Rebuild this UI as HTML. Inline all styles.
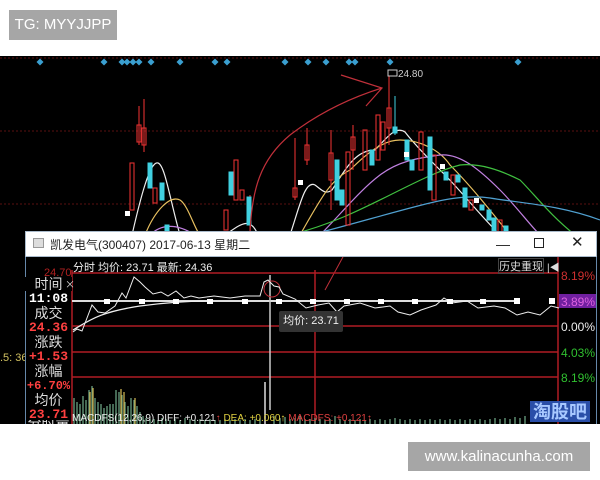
<!DOCTYPE html>
<html><head><meta charset="utf-8"><style>
*{margin:0;padding:0;box-sizing:border-box}
body{width:600px;height:480px;background:#fff;position:relative;overflow:hidden;font-family:"Liberation Sans","Noto Sans CJK SC",sans-serif}
.a{position:absolute;white-space:nowrap}
.l{position:absolute;left:25px;width:47px;text-align:center;font-size:14px;line-height:14px}
.cn{color:#ddd;font-family:"Noto Sans CJK SC",sans-serif;font-size:14px}
.rd{color:#ff4040;font-weight:bold;font-size:13px;font-family:"Liberation Mono",monospace}
.wt{color:#fff;font-weight:bold;font-size:13px;font-family:"Liberation Mono",monospace}
.r{position:absolute;left:561px;font-size:12px;line-height:14px}
</style></head><body>
<div class="a" style="left:9px;top:10px;width:108px;height:30px;background:#a6a6a6;color:#fff;font-size:15px;line-height:30px;text-align:center">TG: MYYJJPP</div>
<div class="a" style="left:0;top:56px;width:600px;height:368px;background:#000"></div>
<svg class="a" style="left:0;top:56px" width="600" height="180" viewBox="0 56 600 180">
<g stroke="#5a1010" stroke-dasharray="2 2"><line x1="0" y1="58" x2="600" y2="58"/><line x1="0" y1="131" x2="600" y2="131"/><line x1="0" y1="204" x2="600" y2="204"/></g>
<g fill="#3a9fd0">
<g id="d"><path d="M0-3.5L3.5 0L0 3.5L-3.5 0Z"/></g>
<use href="#d" x="40" y="62"/><use href="#d" x="104" y="62"/><use href="#d" x="122" y="62"/><use href="#d" x="127" y="62"/><use href="#d" x="133" y="62"/><use href="#d" x="139" y="62"/><use href="#d" x="151" y="62"/><use href="#d" x="180" y="62"/><use href="#d" x="215" y="62"/><use href="#d" x="227" y="62"/><use href="#d" x="285" y="62"/><use href="#d" x="308" y="62"/><use href="#d" x="326" y="62"/><use href="#d" x="349" y="62"/><use href="#d" x="355" y="62"/><use href="#d" x="390" y="62"/><use href="#d" x="518" y="62"/>
</g>
<g fill="none" stroke-width="1.2">
<path d="M132 235C140 200 150 160 158 163C165 165 170 200 180 235" stroke="#eee"/>
<path d="M145 235C155 210 170 195 180 200C188 205 195 230 200 235" stroke="#e8c060"/>
<path d="M150 235C160 225 175 222 195 235" stroke="#c080e0"/>
<path d="M225 235C240 225 250 215 258 235" stroke="#eee"/>
<path d="M290 235C300 205 305 180 315 185C322 190 325 195 332 190C345 170 355 150 375 150C385 140 395 125 405 132C415 145 430 160 445 175C460 190 480 215 500 235" stroke="#eee"/>
<path d="M300 235C320 200 330 180 350 170C370 150 385 140 400 140C420 140 440 150 450 165C470 185 490 210 510 235" stroke="#e8c060"/>
<path d="M320 235C340 215 360 190 380 175C400 160 420 158 440 155C460 153 480 170 500 190C515 205 530 225 540 235" stroke="#c080e0"/>
<path d="M290 235C330 225 360 210 390 195C420 180 440 170 460 165C480 163 500 170 520 180C535 195 550 215 575 235" stroke="#40c040"/>
<path d="M310 235C350 225 400 210 430 203C450 198 470 195 490 198C520 203 560 205 600 220" stroke="#50a0d0"/>
</g>
<g stroke="#e03030" fill="none" stroke-width="1.1">
<line x1="139" y1="106" x2="139" y2="145"/><rect x="137" y="125" width="4" height="17"/>
<line x1="144" y1="99" x2="144" y2="152"/><rect x="142" y="128" width="4" height="17"/>
<rect x="130" y="163" width="4" height="47"/><rect x="153" y="188" width="4" height="15"/>
<rect x="234" y="160" width="4" height="40"/><rect x="240" y="190" width="4" height="10"/><rect x="224" y="210" width="4" height="20"/>
<line x1="295" y1="138" x2="295" y2="200"/><rect x="293" y="188" width="4" height="9"/>
<line x1="307" y1="128" x2="307" y2="165"/><rect x="305" y="145" width="4" height="15"/>
<line x1="331" y1="130" x2="331" y2="210"/><rect x="329" y="153" width="4" height="27"/>
<rect x="346" y="152" width="4" height="73"/>
<line x1="353" y1="125" x2="353" y2="170"/><rect x="351" y="137" width="4" height="13"/>
<rect x="363" y="130" width="4" height="40"/><rect x="376" y="115" width="4" height="45"/><rect x="381" y="122" width="4" height="28"/>
<line x1="389" y1="76" x2="389" y2="145"/><rect x="387" y="108" width="4" height="20"/>
<rect x="419" y="132" width="4" height="38"/><rect x="432" y="155" width="4" height="45"/><rect x="451" y="175" width="4" height="20"/><rect x="469" y="200" width="4" height="10"/><rect x="498" y="220" width="4" height="12"/>
<line x1="250" y1="195" x2="250" y2="260"/>
</g>
<g fill="#40d0e0" stroke="#40d0e0">
<rect x="148" y="163" width="4" height="25"/><rect x="160" y="183" width="4" height="17"/><rect x="165" y="225" width="4" height="10"/>
<rect x="229" y="172" width="4" height="23"/><rect x="247" y="197" width="4" height="28"/>
<rect x="335" y="160" width="4" height="40"/><rect x="340" y="190" width="4" height="15"/><rect x="370" y="150" width="4" height="15"/>
<line x1="395" y1="96" x2="395" y2="135"/><rect x="393" y="127" width="4" height="6"/>
<rect x="405" y="140" width="4" height="20"/><rect x="410" y="160" width="4" height="10"/><rect x="428" y="137" width="4" height="53"/><rect x="444" y="172" width="4" height="8"/><rect x="456" y="175" width="4" height="7"/><rect x="463" y="188" width="4" height="19"/><rect x="480" y="205" width="4" height="5"/><rect x="487" y="210" width="4" height="10"/><rect x="492" y="218" width="4" height="14"/><rect x="504" y="226" width="4" height="7"/>
</g>
<g fill="#fff"><rect x="125" y="211" width="5" height="5"/><rect x="298" y="180" width="5" height="5"/><rect x="404" y="152" width="5" height="5"/><rect x="440" y="164" width="5" height="5"/><rect x="474" y="198" width="5" height="5"/></g>
<rect x="388" y="70" width="9" height="6" fill="none" stroke="#ccc"/>
<text x="398" y="77" fill="#ccc" font-size="10" font-family="Liberation Sans">24.80</text>
<path d="M250 232C252 190 260 160 290 135C320 112 350 98 382 88M341 75L382 88L366 106" stroke="#c0303a" fill="none" stroke-width="1.2"/>
<path d="M0 250L8 246L20 244" stroke="#e8c060" fill="none"/><path d="M0 258L10 253L22 252" stroke="#40c040" fill="none"/>
</svg>
<div class="a" style="left:0;top:352px;color:#d0c060;font-size:11px">.5: 36</div>
<div class="a" style="left:25px;top:233px;width:572px;height:191px;background:#000;border-left:1px solid #6688aa;border-right:1px solid #6688aa"></div>
<div class="a" style="left:25px;top:231px;width:572px;height:26px;background:#fff;border:1px solid #aabbcc"></div>
<div class="a" style="left:33px;top:238px;width:11px;height:10px;border:1px solid #999;background:#ddd"></div>
<div class="a" style="left:50px;top:236px;font-size:12px;color:#222">凯发电气(300407) 2017-06-13 星期二</div>
<div class="a" style="left:496px;top:236px;font-size:14px;color:#222">—</div>
<div class="a" style="left:534px;top:238px;width:10px;height:10px;border:1.5px solid #222"></div>
<div class="a" style="left:571px;top:233px;font-size:15px;color:#222">✕</div>
<svg class="a" style="left:0;top:257px" width="600" height="167" viewBox="0 257 600 167">
<path d="M317 248L350 244L325 290" stroke="#c0303a" fill="none"/>
<g stroke="#b01c24" stroke-width="1.5"><line x1="72" y1="273" x2="558" y2="273"/><line x1="72" y1="326" x2="558" y2="326"/><line x1="72" y1="352" x2="558" y2="352"/><line x1="72" y1="377" x2="558" y2="377"/><line x1="315" y1="270" x2="315" y2="424"/><line x1="558" y1="257" x2="558" y2="424"/><line x1="72" y1="270" x2="72" y2="424"/></g>
<line x1="72" y1="301" x2="520" y2="301" stroke="#ddd" stroke-width="2"/>
<line x1="270" y1="275" x2="270" y2="410" stroke="#ccc" stroke-width="1.5"/>
<circle cx="272" cy="289" r="8" stroke="#c0303a" fill="none"/>
<path d="M73 332L77 329L82 331L92 305L98 312L105 313L115 306L122 293L126 298L134 277L140 282L145 287L153 294L161 292L168 296L176 291L184 298L191 296L199 298L214 296L230 298L245 296L260 296L264 282L268 280L274 286L279 287L283 294L295 299L306 308L318 305L329 303L337 312L344 306L360 303L375 308L390 306L398 312L410 315L421 310L436 305L444 298L452 303L467 301L478 308L494 306L505 308L517 315L528 312L540 315L551 306L559 308" stroke="#eee" fill="none"/>
<path d="M73 330C90 320 100 312 140 306C170 302 190 301 210 301" stroke="#eee" fill="none" stroke-width="1.3"/>
<g fill="#fff"><rect x="104" y="299" width="6" height="5"/><rect x="139" y="299" width="6" height="5"/><rect x="173" y="299" width="6" height="5"/><rect x="207" y="299" width="6" height="5"/><rect x="242" y="299" width="6" height="5"/><rect x="276" y="299" width="6" height="5"/><rect x="310" y="299" width="6" height="5"/><rect x="344" y="299" width="6" height="5"/><rect x="378" y="299" width="6" height="5"/><rect x="412" y="299" width="6" height="5"/><rect x="447" y="299" width="6" height="5"/><rect x="480" y="299" width="6" height="5"/><rect x="514" y="298" width="6" height="6"/><rect x="549" y="298" width="6" height="6"/></g>
<g stroke="#6aa080" stroke-width="1.3">
<path d="M74 424V398M77 424V402M80 424V404M83 424V396M86 424V400M89 424V390M92 424V386M95 424V398M98 424V402M101 424V404M104 424V408M107 424V406M110 424V404M113 424V404M116 424V390M119 424V392M122 424V395M125 424V402M128 424V406M131 424V398M134 424V400M137 424V406M140 424V412M143 424V416"/>
<path d="M146 424V418M150 424V419M154 424V419M158 424V420M162 424V418M166 424V419M170 424V420M175 424V419M180 424V420M185 424V418M190 424V419M195 424V420M200 424V419M205 424V420M210 424V419M215 424V420M220 424V420M225 424V419M230 424V420M235 424V419M240 424V420M245 424V419M250 424V420M255 424V419M260 424V418M274 424V416M280 424V418M285 424V417M290 424V419M295 424V418M300 424V416M305 424V419M310 424V419M315 424V418M320 424V419M325 424V420M330 424V419M335 424V416M340 424V419M345 424V420M350 424V419M355 424V420M360 424V419M365 424V420M370 424V419M375 424V420M380 424V419M385 424V420M390 424V419M395 424V418M400 424V419M405 424V420M410 424V419M415 424V420M420 424V419M425 424V420M430 424V419M435 424V420M440 424V419M445 424V420M450 424V419M455 424V420M460 424V419M465 424V420M470 424V419M475 424V420M480 424V419M485 424V420M490 424V419M495 424V418M500 424V419M505 424V418M510 424V419M515 424V417M520 424V418M525 424V416"/>
</g>
<g stroke="#c8b050" stroke-width="1.3"><path d="M90 424V392M93 424V388M121 424V389M124 424V392M135 424V398"/></g>
<line x1="265" y1="424" x2="265" y2="382" stroke="#ddd" stroke-width="1.5"/>
</svg>
<div class="a" style="left:279px;top:311px;width:64px;height:21px;background:#333;border-radius:2px;color:#eee;font-size:11px;line-height:21px;text-align:center">均价: 23.71</div>
<div class="a" style="left:73px;top:259px;font-size:11px;color:#eee;font-family:'Liberation Sans','Noto Sans CJK SC',sans-serif">分时 均价: 23.71 最新: 24.36</div>
<div class="a" style="left:498px;top:258px;width:46px;height:16px;border:1px solid #444;font-size:11px;color:#ddd;text-align:center;line-height:15px;font-family:'Noto Sans CJK SC',sans-serif">历史重现</div>
<div class="a" style="left:547px;top:259px;font-size:10px;color:#ddd">|◀</div>
<div class="a" style="left:44px;top:267px;font-size:11px;color:#b02020">24.70</div>
<div class="l cn" style="top:277px;background:#000">时间<span style="font-size:10px;position:absolute;right:-3px;top:0">×</span></div>
<div class="l wt" style="top:292px">11:08</div>
<div class="l cn" style="top:306px">成交</div>
<div class="l rd" style="top:321px">24.36</div>
<div class="l cn" style="top:335px">涨跌</div>
<div class="l rd" style="top:350px">+1.53</div>
<div class="l cn" style="top:364px">涨幅</div>
<div class="l rd" style="top:379px;font-size:12px">+6.70%</div>
<div class="l cn" style="top:393px">均价</div>
<div class="l rd" style="top:408px">23.71</div>
<div class="l cn" style="top:420px;height:4px;overflow:hidden"><span style="position:relative;top:-4px">分时量</span></div>
<div class="a" style="left:72px;top:413px;font-size:10px;color:#eee;height:11px;overflow:hidden">MACDFS(12,26,9) DIFF: +0.121<span style="color:#e04040">↑</span> <span style="color:#e0d040">DEA: +0.060↑</span> <span style="color:#e04040">MACDFS: +0.121↑</span></div>
<div class="r" style="top:269px;color:#d03030">8.19%</div>
<div class="a" style="left:559px;top:294px;width:37px;height:14px;background:#7020a0"></div>
<div class="r" style="top:295px;color:#e060e0">3.89%</div>
<div class="r" style="top:320px;color:#eee">0.00%</div>
<div class="r" style="top:346px;color:#30c030">4.03%</div>
<div class="r" style="top:371px;color:#30c030">8.19%</div>
<div class="a" style="left:530px;top:401px;width:60px;height:21px;background:#2a4ea8;color:#a8c8ff;font-size:18px;line-height:21px;text-align:center;font-weight:bold;font-family:'Noto Sans CJK SC',sans-serif">淘股吧</div>
<div class="a" style="left:408px;top:442px;width:182px;height:29px;background:#a6a6a6;color:#fff;font-size:15px;line-height:29px;text-align:center">www.kalinacunha.com</div>
</body></html>
